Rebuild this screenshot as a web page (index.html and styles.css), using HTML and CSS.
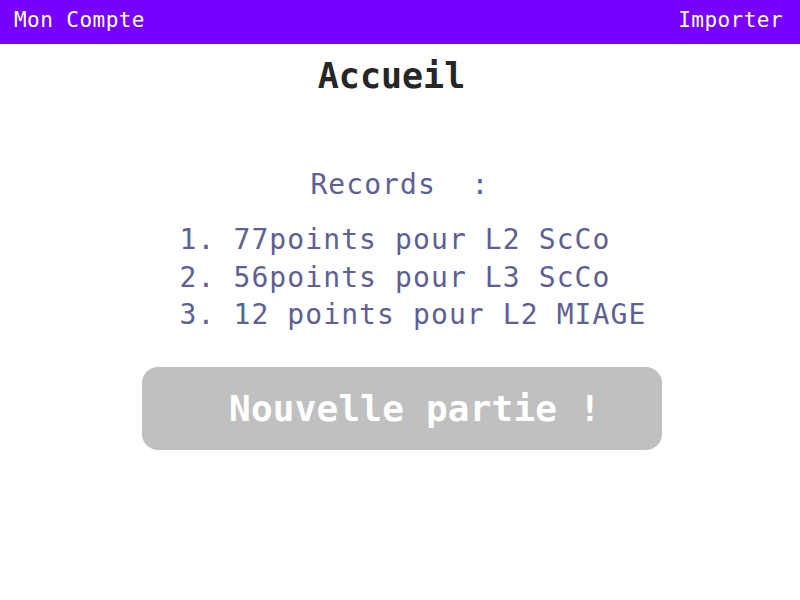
FILE: index.html
```
<!DOCTYPE html>
<html lang="fr">
<head>
<meta charset="utf-8">
<title>Accueil</title>
<link rel="stylesheet" href="styles.css">
</head>
<body>
<header class="topbar">
  <a class="topbar-link" href="#">Mon Compte</a>
  <a class="topbar-link" href="#">Importer</a>
</header>
<main class="home">
  <h1 class="title">Accueil</h1>
  <h2 class="records-title">Records&nbsp; :</h2>
  <ol class="records">
    <li>1. 77points pour L2 ScCo</li>
    <li>2. 56points pour L3 ScCo</li>
    <li>3. 12 points pour L2 MIAGE</li>
  </ol>
  <button class="new-game" type="button">Nouvelle partie !</button>
</main>
</body>
</html>
```
FILE: styles.css
```
* { box-sizing: border-box; }
html, body { margin: 0; padding: 0; background: #ffffff; }
body { font-family: "DejaVu Sans Mono", "Liberation Mono", monospace; }

.topbar {
  display: flex;
  justify-content: space-between;
  height: 44px;
  padding: 8px 17px 0 14px;
  background: #7700ff;
}
.topbar-link {
  color: #ffffff;
  text-decoration: none;
  font-size: 21px;
  line-height: 24px;
  letter-spacing: 0.45px;
}

.home {
  display: flex;
  flex-direction: column;
  align-items: center;
}
.title {
  margin: 12px 0 0 0;
  padding-right: 17px;
  font-size: 35px;
  line-height: 40px;
  font-weight: bold;
  color: #262626;
}
.records-title {
  margin: 71px 0 0 0;
  font-size: 28px;
  line-height: 36px;
  font-weight: normal;
  letter-spacing: 1.05px;
  color: #5f5f94;
}
.records {
  list-style: none;
  margin: 18px 0 0 0;
  padding: 0 0 0 26px;
  font-size: 28px;
  line-height: 37.5px;
  letter-spacing: 1.1px;
  color: #5f5f94;
}
.new-game {
  margin: 33px 0 0 4px;
  width: 520px;
  height: 83px;
  padding: 0 0 0 26px;
  border: none;
  border-radius: 16px;
  background: #c0c0c0;
  color: #ffffff;
  font-family: "DejaVu Sans Mono", "Liberation Mono", monospace;
  font-size: 36px;
  font-weight: bold;
  line-height: 83px;
  letter-spacing: 0.2px;
}
```
